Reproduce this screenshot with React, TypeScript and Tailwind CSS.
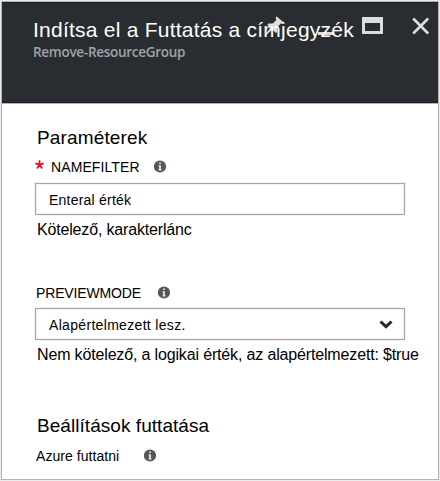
import React from 'react';

function InfoIcon() {
  return (
    <svg className="mb-[2px] block h-[13px] w-[13px] shrink-0" viewBox="0 0 13 13">
      <circle cx="6" cy="6.5" r="6.1" fill="#53575b" />
      <path d="M5.1 2.4h1.8v1.7H5.100zM4.500 5.200h2.400v4.300h.8v1H4.400v-1h.7V6.200h-.6z" fill="#e9e9e9" />
    </svg>
  );
}

function Header() {
  return (
    <header className="relative h-[101px] border-y border-[#1c2028] bg-[#292d31] pl-[31px] pt-[13px]">
      <div className="absolute right-[8px] top-[13px] flex items-start">
        <svg className="mr-[34px] h-[20px] w-[19px]" viewBox="0 0 19 20">
          <path d="M11.500.200l7 6-.8 1.500-1.900-.1-3.800 3.900.300 4.600-1.300.900-3.600-3.500L1.200 19l-.9-.6 5-6.700L2.300 8.800l1-1.300 4.500.100 3.500-3.700-.6-2z" fill="#dcdddd" />
        </svg>
        <div className="mr-[29px] mt-[16px] h-[3px] w-[15px] bg-[#dcdddd]" />
        <div className="mr-[29px] mt-[1px] h-[17px] w-[21px] border-[3px] border-t-[6px] border-[#dcdddd]" />
        <svg className="mt-[1px] h-[18px] w-[18px]" viewBox="0 0 18 18">
          <path d="M1.200 1.500l15 15M16.200 1.500l-15 15" stroke="#dcdddd" strokeWidth="2.600" />
        </svg>
      </div>
      <h1 className="relative h-[28px] whitespace-nowrap text-[21px] leading-[28px] tracking-[0.24px] text-white">
        Indítsa el a Futtatás a címjegyzék
      </h1>
      <p className="-mt-px h-[18px] whitespace-nowrap font-['Open_Sans',sans-serif] text-[13.500px] font-semibold leading-[18px] tracking-[-0.28px] text-[#a0a3a5]">
        Remove-ResourceGroup
      </p>
    </header>
  );
}

export default function App() {
  return (
    <div className="h-[481px] w-[440px] bg-[#ececec] p-px font-['Liberation_Sans',Arial,sans-serif] text-black">
      <div className="h-[479px] w-[438px] border border-[#b4b4b4] bg-white">
        <Header />
        <main className="border-t border-[#b4b4b4] pl-[34px] pt-[20px]">
          <h2 className="ml-px h-[28px] text-[19px] leading-[28px] tracking-[0.15px]">Paraméterek</h2>
          <div className="mt-[5px] flex h-[20px] items-center">
            <svg className="-ml-px mb-[5px] mr-[7px] h-[9px] w-[9px]" viewBox="0 0 9 9">
              <path d="M4.500 4.700V.2M4.500 4.700L.3 3.300M4.500 4.700l4.200-1.400M4.500 4.700L1.900 8.500M4.500 4.700l2.600 3.800" stroke="#e81123" strokeWidth="1.800" />
            </svg>
            <span className="w-[103px] text-[14px] leading-[20px] tracking-[0.1px]">NAMEFILTER</span>
            <InfoIcon />
          </div>
          <div className="-ml-px mt-[6px] flex h-[32px] w-[370px] items-center border border-[#a5a5a5] pl-[13px] pt-[3px] text-[14px] tracking-[0.22px] shadow-[0_0_0_1px_#f2f2f2,inset_0_0_0_1px_#f2f2f2]">
            Enteral érték
          </div>
          <p className="ml-px mt-[4px] h-[22px] text-[16px] leading-[22px] tracking-[-0.17px]">Kötelező, karakterlánc</p>
          <div className="mt-[42px] flex h-[20px] items-center">
            <span className="w-[122px] text-[14px] leading-[20px] tracking-[-0.15px]">PREVIEWMODE</span>
            <InfoIcon />
          </div>
          <div className="-ml-px mt-[5px] flex h-[32px] w-[370px] items-center justify-between border border-[#a5a5a5] pl-[13px] pr-[11px] pt-[3px] text-[14px] tracking-[0.32px] shadow-[0_0_0_1px_#f2f2f2,inset_0_0_0_1px_#f2f2f2]">
            Alapértelmezett lesz.
            <svg className="mb-[3px] h-[9px] w-[14px]" viewBox="0 0 14 9">
              <path d="M1.500 1.500L7 6.700l5.500-5.200" fill="none" stroke="#24292e" strokeWidth="3" />
            </svg>
          </div>
          <p className="ml-px mt-[4px] h-[22px] whitespace-nowrap text-[16px] leading-[22px] tracking-[-0.155px]">
            Nem kötelező, a logikai érték, az alapértelmezett: $true
          </p>
          <h2 className="ml-px mt-[46px] h-[28px] text-[19px] leading-[28px] tracking-[0.05px]">Beállítások futtatása</h2>
          <div className="mt-[6px] flex h-[20px] items-center">
            <span className="w-[108px] text-[14px] leading-[20px] tracking-[0.05px]">Azure futtatni</span>
            <InfoIcon />
          </div>
        </main>
      </div>
    </div>
  );
}
